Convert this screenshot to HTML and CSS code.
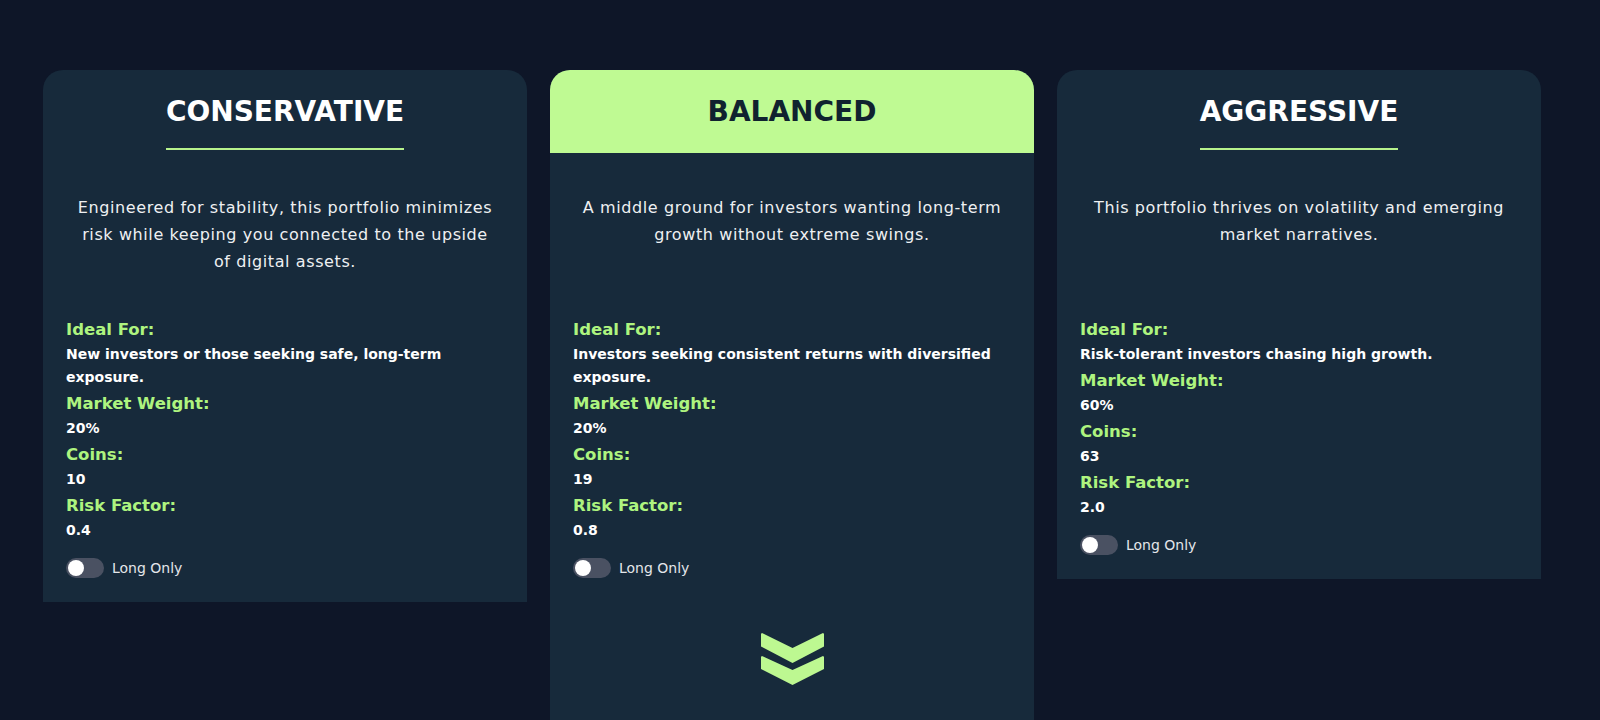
FILE: index.html
```html
<!DOCTYPE html>
<html lang="en">
<head>
    <meta charset="UTF-8">
    <meta name="viewport" content="width=device-width, initial-scale=1.0">
    <title>Portfolios</title>
    <link rel="stylesheet" href="styles.css">
</head>
<body>
    <section class="plans">
        <div class="plan">
            <div class="plan-header">
                <h2 class="plan-title">CONSERVATIVE</h2>
            </div>
            <p class="plan-desc">Engineered for stability, this portfolio minimizes risk while keeping you connected to the upside of digital assets.</p>
            <div class="plan-details">
                <div class="detail-label">Ideal For:</div>
                <div class="detail-value">New investors or those seeking safe, long-term exposure.</div>
                <div class="detail-label">Market Weight:</div>
                <div class="detail-value">20%</div>
                <div class="detail-label">Coins:</div>
                <div class="detail-value">10</div>
                <div class="detail-label">Risk Factor:</div>
                <div class="detail-value">0.4</div>
            </div>
            <label class="toggle">
                <input type="checkbox">
                <span class="toggle-track"></span>
                <span class="toggle-text">Long Only</span>
            </label>
        </div>

        <div class="plan plan-featured">
            <div class="plan-header">
                <h2 class="plan-title">BALANCED</h2>
            </div>
            <p class="plan-desc">A middle ground for investors wanting long-term growth without extreme swings.</p>
            <div class="plan-details">
                <div class="detail-label">Ideal For:</div>
                <div class="detail-value">Investors seeking consistent returns with diversified exposure.</div>
                <div class="detail-label">Market Weight:</div>
                <div class="detail-value">20%</div>
                <div class="detail-label">Coins:</div>
                <div class="detail-value">19</div>
                <div class="detail-label">Risk Factor:</div>
                <div class="detail-value">0.8</div>
            </div>
            <label class="toggle">
                <input type="checkbox">
                <span class="toggle-track"></span>
                <span class="toggle-text">Long Only</span>
            </label>
            <div class="plan-more">
                <svg width="63" height="52" viewBox="0 0 63 52">
                    <path d="M1 0 L31.5 15 L62 0 Q63 0 63 1.5 L63 13.5 L31.5 30 L0 13.5 L0 1.5 Q0 0 1 0 Z" fill="#bdf891"/>
                    <path d="M1 23 L31.5 37 L62 23 Q63 23 63 24.5 L63 36 L31.5 52 L0 36 L0 24.5 Q0 23 1 23 Z" fill="#bdf891"/>
                </svg>
            </div>
        </div>

        <div class="plan">
            <div class="plan-header">
                <h2 class="plan-title">AGGRESSIVE</h2>
            </div>
            <p class="plan-desc">This portfolio thrives on volatility and emerging market narratives.</p>
            <div class="plan-details">
                <div class="detail-label">Ideal For:</div>
                <div class="detail-value">Risk-tolerant investors chasing high growth.</div>
                <div class="detail-label">Market Weight:</div>
                <div class="detail-value">60%</div>
                <div class="detail-label">Coins:</div>
                <div class="detail-value">63</div>
                <div class="detail-label">Risk Factor:</div>
                <div class="detail-value">2.0</div>
            </div>
            <label class="toggle">
                <input type="checkbox">
                <span class="toggle-track"></span>
                <span class="toggle-text">Long Only</span>
            </label>
        </div>
    </section>
</body>
</html>
```

FILE: styles.css
```css
* {
    margin: 0;
    padding: 0;
    box-sizing: border-box;
}

body {
    font-family: 'DejaVu Sans', 'Noto Sans', sans-serif;
    background: #0e1628;
    color: #ffffff;
    min-height: 100vh;
    overflow: hidden;
}

.plans {
    display: flex;
    align-items: flex-start;
    gap: 23px;
    padding: 70px 0 0 43px;
}

.plan {
    width: 484px;
    background: #172a3b;
    border-radius: 20px 20px 0 0;
    padding-bottom: 24px;
}

.plan-header {
    height: 83px;
    padding-top: 25px;
    text-align: center;
    border-radius: 20px 20px 0 0;
}

.plan-title {
    display: inline-block;
    font-size: 28px;
    font-weight: bold;
    line-height: 34px;
    padding-bottom: 19px;
    border-bottom: 2px solid #b7f28c;
    color: #ffffff;
}

.plan-featured .plan-header {
    background: #bffa93;
}

.plan-featured .plan-title {
    color: #10222f;
    border-bottom-color: transparent;
}

.plan-desc {
    height: 164px;
    padding: 41px 30px 0;
    font-size: 16px;
    letter-spacing: 0.6px;
    line-height: 27px;
    text-align: center;
    color: #eef0f2;
}

.plan-details {
    padding: 0 23px;
}

.detail-label {
    font-size: 16.5px;
    font-weight: bold;
    line-height: 26px;
    color: #aef47f;
}

.detail-value {
    font-size: 14px;
    font-weight: bold;
    line-height: 23px;
    margin-bottom: 2px;
    color: #ffffff;
}

.toggle {
    display: flex;
    align-items: center;
    gap: 8px;
    margin: 16px 23px 0;
    cursor: pointer;
}

.toggle input {
    display: none;
}

.toggle-track {
    position: relative;
    width: 38px;
    height: 20px;
    border-radius: 10px;
    background: #4a5162;
}

.toggle-track::after {
    content: '';
    position: absolute;
    top: 2px;
    left: 2px;
    width: 16px;
    height: 16px;
    border-radius: 50%;
    background: #ffffff;
    transition: left 0.2s ease;
}

.toggle input:checked + .toggle-track {
    background: #aef47f;
}

.toggle input:checked + .toggle-track::after {
    left: 20px;
}

.toggle-text {
    font-size: 14px;
    color: #e4e6ea;
}

.plan-more {
    display: flex;
    justify-content: center;
    padding: 55px 0 60px;
}
```
